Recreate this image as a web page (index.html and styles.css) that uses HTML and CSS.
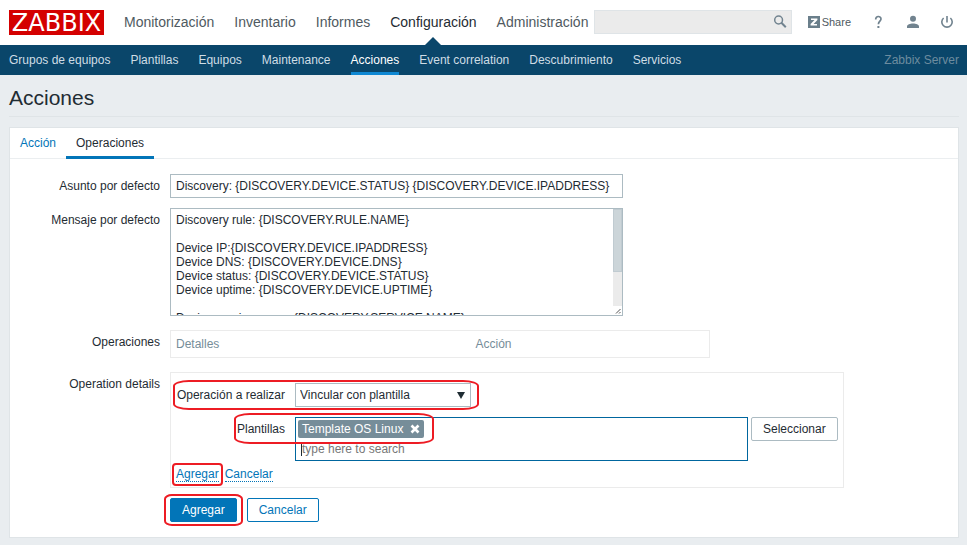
FILE: index.html
```html
<!DOCTYPE html>
<html lang="es">
<head>
<meta charset="utf-8">
<title>Acciones</title>
<link rel="stylesheet" href="styles.css">
</head>
<body>
<header class="top">
  <a class="logo" href="#">ZABBIX</a>
  <nav class="main-nav">
    <a href="#">Monitorización</a>
    <a href="#">Inventario</a>
    <a href="#">Informes</a>
    <a href="#" class="active">Configuración</a>
    <a href="#">Administración</a>
  </nav>
  <form class="search">
    <input type="text" aria-label="Buscar">
    <button type="button" aria-label="Buscar">
      <svg width="14" height="14" viewBox="0 0 14 14"><circle cx="5.6" cy="5" r="3.9" fill="none" stroke="#71838f" stroke-width="1.5"/><path d="M8.4 7.8L12.8 12.2" stroke="#71838f" stroke-width="2"/></svg>
    </button>
  </form>
  <div class="user-nav">
    <a class="share" href="#"><svg width="12" height="12" viewBox="0 0 12 12"><path fill="#6a7f8b" d="M0 0h12v12H0z"/><path fill="#fff" d="M3 2.4h6.4v1.5L5.6 8H9v1.6H2.6V8.100L6.500 4H3z"/></svg>Share</a>
    <a href="#" aria-label="Ayuda"><svg width="14" height="14" viewBox="0 0 14 14"><path d="M4.700 4.500C4.400 .6 10 .6 10 3.900C10 6 7.400 6.300 7.400 9.300" fill="none" stroke="#71838f" stroke-width="1.700"/><path fill="#71838f" d="M6.400 11h2v2h-2z"/></svg></a>
    <a href="#" aria-label="Perfil"><svg width="14" height="14" viewBox="0 0 14 14"><circle cx="8" cy="3.700" r="3" fill="#71838f"/><path fill="#71838f" d="M2 13v-1.600C2 9.400 5 8.400 8 8.400s6 1 6 3V13z"/></svg></a>
    <a href="#" aria-label="Salir"><svg width="14" height="14" viewBox="0 0 14 14"><path d="M4.600 3A5.200 5.200 0 1 0 11.400 3M8 1v6.400" fill="none" stroke="#71838f" stroke-width="1.600"/></svg></a>
  </div>
</header>
<nav class="sub-nav">
  <a href="#">Grupos de equipos</a>
  <a href="#">Plantillas</a>
  <a href="#">Equipos</a>
  <a href="#">Maintenance</a>
  <a href="#" class="active">Acciones</a>
  <a href="#">Event correlation</a>
  <a href="#">Descubrimiento</a>
  <a href="#">Servicios</a>
  <span class="server">Zabbix Server</span>
</nav>
<main>
  <h1>Acciones</h1>
  <section class="panel">
    <nav class="tabs">
      <a href="#">Acción</a>
      <a href="#" class="active">Operaciones</a>
    </nav>
    <form class="form">
      <div class="row">
        <label class="label" for="subject">Asunto por defecto</label>
        <input class="field" id="subject" type="text" value="Discovery: {DISCOVERY.DEVICE.STATUS} {DISCOVERY.DEVICE.IPADDRESS}">
      </div>
      <div class="row">
        <label class="label" for="message">Mensaje por defecto</label>
        <div class="message">
          <textarea class="field" id="message">Discovery rule: {DISCOVERY.RULE.NAME}

Device IP:{DISCOVERY.DEVICE.IPADDRESS}
Device DNS: {DISCOVERY.DEVICE.DNS}
Device status: {DISCOVERY.DEVICE.STATUS}
Device uptime: {DISCOVERY.DEVICE.UPTIME}

Device service name: {DISCOVERY.SERVICE.NAME}
Device service port: {DISCOVERY.SERVICE.PORT}
Device service status: {DISCOVERY.SERVICE.STATUS}
Device service uptime: {DISCOVERY.SERVICE.UPTIME}</textarea>
          <div class="scrollbar">
            <span class="thumb"></span>
            <svg class="grip" width="9" height="9" viewBox="0 0 9 9"><path d="M3 7.500L7.500 3M6 7.500L7.500 6" stroke="#555" fill="none"/></svg>
          </div>
        </div>
      </div>
      <div class="row spaced">
        <span class="label">Operaciones</span>
        <table class="operations">
          <thead><tr><th>Detalles</th><th>Acción</th></tr></thead>
        </table>
      </div>
      <div class="row spaced">
        <span class="label">Operation details</span>
        <div class="details">
          <div class="details-grid">
            <label class="label" for="operation">Operación a realizar</label>
            <div class="select">
              <select id="operation"><option>Vincular con plantilla</option></select>
              <span class="arrow"></span>
            </div>
            <label class="label" for="templates">Plantillas</label>
            <div class="picker">
              <div class="multiselect">
                <span class="chip">Template OS Linux<button type="button" aria-label="Quitar"><svg width="10" height="10" viewBox="0 0 10 10"><path d="M1.500 1.500l7 7M8.500 1.500l-7 7" stroke="#fff" stroke-width="2.600"/></svg></button></span>
                <div class="entry"><input id="templates" type="text" placeholder="type here to search"></div>
              </div>
              <button type="button" class="btn grey">Seleccionar</button>
            </div>
          </div>
          <div class="links">
            <a href="#" class="marked">Agregar<span class="mark mark-link"></span></a>
            <a href="#">Cancelar</a>
          </div>
          <span class="mark mark-operation"></span>
          <span class="mark mark-template"></span>
        </div>
      </div>
      <div class="row">
        <span class="label"></span>
        <div class="buttons">
          <span class="marked"><button type="button" class="btn primary">Agregar</button><span class="mark mark-submit"></span></span>
          <button type="button" class="btn">Cancelar</button>
        </div>
      </div>
    </form>
  </section>
</main>
</body>
</html>
```
FILE: styles.css
```css
* { box-sizing: border-box; }

body {
  margin: 0;
  background: #e9edf0;
  color: #1f2c33;
  font: 12px/14px "Liberation Sans", Arial, sans-serif;
}

a { color: #0275b8; text-decoration: none; }
input, textarea, select, button { font: inherit; color: inherit; margin: 0; border-radius: 0; outline: 0; }
svg { display: block; }

.top {
  display: flex;
  align-items: center;
  height: 45px;
  padding: 0 14px 0 9px;
  background: #fff;
}
.logo {
  width: 95px;
  height: 25px;
  background: #d40000;
  color: #fff;
  font: 24px/27px "DejaVu Sans", Verdana, sans-serif;
  text-align: center;
}
.main-nav { display: flex; gap: 20px; margin-left: 20px; font-size: 14px; line-height: 45px; }
.main-nav a { color: #4f5a61; position: relative; }
.main-nav a.active { color: #1f2c33; }
.main-nav a.active::after {
  content: "";
  position: absolute;
  left: calc(50% - 8px);
  bottom: 0;
  border: 8px solid transparent;
  border-top: 0;
  border-bottom-color: #0a466a;
}
.search { position: relative; flex: 0 1 198px; margin: -1px 0 0 auto; }
.search input { display: block; width: 100%; height: 24px; padding: 0 24px 0 5px; border: 1px solid #dfe4e7; background: #ebebeb; }
.search button { position: absolute; right: 5px; top: 5px; padding: 0; border: 0; background: none; }
.user-nav { display: flex; align-items: center; gap: 20px; margin-left: 16px; margin-top: -1px; }
.user-nav .share { display: flex; align-items: center; gap: 2px; color: #4f5a61; font-size: 11px; }

.sub-nav { display: flex; gap: 20px; padding: 0 8px 0 9px; background: #0a466a; line-height: 30px; }
.sub-nav a { color: #cfdde5; height: 30px; }
.sub-nav a.active { color: #fff; border-bottom: 3px solid #0f88d3; }
.server { margin-left: auto; color: #6d8c9f; }

main { padding: 0 8px 7px 9px; }
h1 { margin: 0 0 10px; padding: 10px 0 6px; border-bottom: 1px solid #dfe4e7; font-size: 21px; font-weight: 400; line-height: 25px; }

.panel { background: #fff; border: 1px solid #dfe4e7; }
.tabs { display: flex; border-bottom: 1px solid #ebeef0; }
.tabs a { padding: 0 10px; height: 31px; margin-bottom: -1px; line-height: 30px; }
.tabs a.active { color: #1f2c33; border-bottom: 3px solid #0275b8; }

.form { display: flex; flex-direction: column; gap: 10px; padding: 15px 10px; }
.row { display: flex; align-items: flex-start; gap: 10px; }
.row.spaced { margin-top: 4px; }
.row > .label { width: 140px; flex: none; }
.label { text-align: right; line-height: 24px; }
.field { width: 453px; padding: 4px 5px; border: 1px solid #acbbc2; background: #fff; }
input.field { height: 24px; }
.message { position: relative; }
textarea.field { display: block; height: 108px; resize: none; scrollbar-width: none; }
.scrollbar { position: absolute; top: 1px; right: 1px; bottom: 1px; width: 9px; display: flex; flex-direction: column; background: #ebebeb; pointer-events: none; }
.thumb { height: 63px; background: #ccd5d9; border: 1px solid #c0cbd1; }
.grip { margin-top: auto; background: #fff; }

.operations { width: 540px; border-collapse: collapse; border: 1px solid #ebebeb; }
.operations th { height: 27px; padding: 0 5px; color: #768d99; font-weight: 400; text-align: left; }
.operations th:first-child { width: 300px; }

.details { position: relative; border: 1px solid #ebebeb; padding: 10px 5px 5px; }
.details-grid { display: grid; grid-template-columns: 109px auto; gap: 10px; }
.select { position: relative; width: 176px; }
.select select { display: block; appearance: none; width: 100%; height: 24px; padding: 0 20px 0 4px; border: 1px solid #acbbc2; background: #fff; }
.arrow { position: absolute; right: 6px; top: 9px; border: 4px solid transparent; border-top: 7px solid #1f2c33; border-bottom: 0; pointer-events: none; }
.picker { display: flex; align-items: flex-start; gap: 3px; }
.multiselect { width: 453px; height: 44px; padding: 2px; border: 1px solid #00669e; }
.chip { display: flex; width: fit-content; align-items: center; gap: 7px; height: 18px; padding: 0 4px; background: #768d99; color: #fff; border-radius: 2px; }
.chip button { padding: 0; border: 0; background: none; }
.entry { display: flex; margin: 4px 3px; border-left: 1px solid #1f2c33; height: 14px; }
.entry input { flex: 1; padding: 0; border: 0; background: none; }
.entry input::placeholder { color: #777; }

.links { display: flex; gap: 6px; margin-top: 6px; }
.links a { border-bottom: 1px dotted #0275b8; }

.btn { height: 24px; padding: 0 11px; border: 1px solid #0275b8; border-radius: 2px; background: #fff; color: #0275b8; }
.btn.primary { background: #0275b8; color: #fff; }
.btn.grey { border-color: #acbbc2; color: #1f2c33; }
.buttons { display: flex; gap: 10px; }

.marked { position: relative; }
.mark { position: absolute; border: 2px solid #ed1c24; border-radius: 16px / 6px; pointer-events: none; }
.mark-operation { left: 2px; top: 7px; width: 306px; height: 30px; }
.mark-template { left: 63px; top: 40px; width: 200px; height: 31px; }
.mark-link { inset: -4px -4px -5px; border-radius: 4px; }
.mark-submit { inset: -4px -6px; border-radius: 8px / 5px; }
```
